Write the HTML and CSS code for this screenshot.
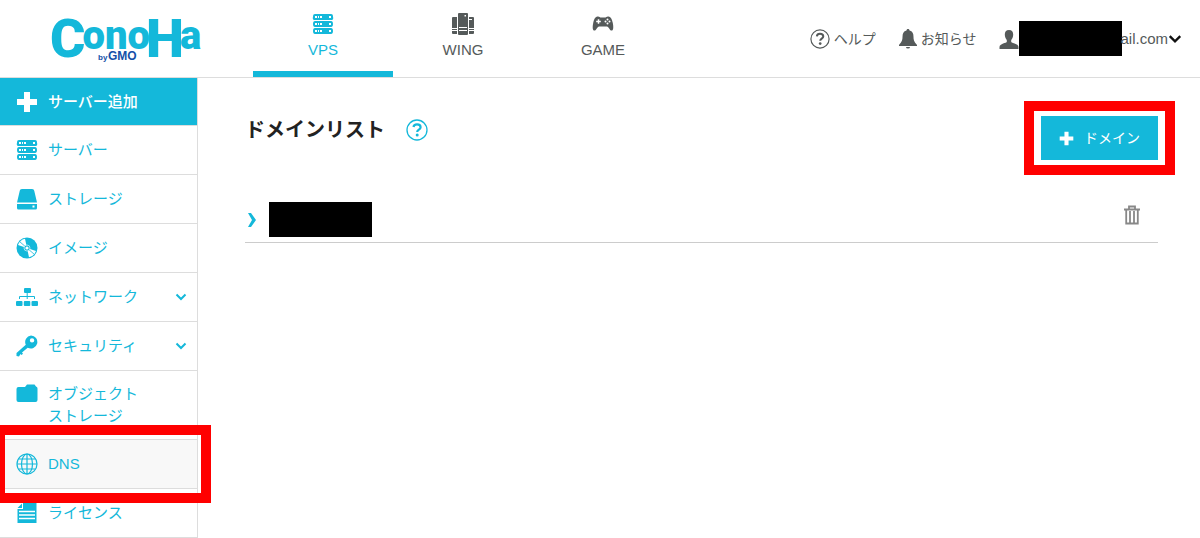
FILE: index.html
```
<!DOCTYPE html>
<html lang="ja">
<head>
  <meta charset="UTF-8" />
  <meta name="viewport" content="width=device-width, initial-scale=1.0"/>
  <title>ドメインリスト | ConoHa</title>
  <link rel="stylesheet" href="styles.css">
</head>
<body>
  <!-- 共通アイコン -->
  <svg class="sprite" aria-hidden="true">
    <symbol id="i-server" viewBox="0 0 22 22">
      <path fill="currentColor" fill-rule="evenodd" d="M3 1h16a2 2 0 0 1 2 2v1a2 2 0 0 1-2 3H3a2 2 0 0 1-2-3V3a2 2 0 0 1 2-2zM3 3v2h2V3zM6 3v2h1V3zM8 3v2h2V3zM17 3v2h2V3zM3 8h16a2 3 0 0 1 0 6H3a2 3 0 0 1 0-6zM3 10v2h2v-2zM6 10v2h1v-2zM8 10v2h2v-2zM17 10v2h2v-2zM3 15h16a2 3 0 0 1 0 6H3a2 3 0 0 1 0-6zM3 17v2h2v-2zM6 17v2h1v-2zM8 17v2h2v-2zM17 17v2h2v-2z"/>
    </symbol>
    <symbol id="i-help" viewBox="0 0 22 22">
      <circle cx="11" cy="11" r="10" fill="none" stroke="currentColor" stroke-width="1.3"/>
      <path d="M7.500 8C7.700 6.300 9.100 5.300 11 5.300c2.100 0 3.600 1.100 3.600 3 0 2.300-3.400 2.400-3.400 4.700" fill="none" stroke="currentColor" stroke-width="2.200"/>
      <circle cx="11.200" cy="16" r="1.500" fill="currentColor"/>
    </symbol>
    <symbol id="i-plus" viewBox="0 0 22 22">
      <path fill="currentColor" d="M8 1h6v7h7v6h-7v7H8v-7H1V8h7z"/>
    </symbol>
    <symbol id="i-down" viewBox="0 0 12 12">
      <path d="M1.500 3.500L6 8l4.500-4.500" fill="none" stroke="currentColor" stroke-width="2"/>
    </symbol>
  </svg>

  <header class="header">
    <a class="logo" href="#" aria-label="ConoHa by GMO">
      <svg width="160" height="58" viewBox="0 0 160 58">
        <text class="logo-name" y="45"><tspan x="0">C</tspan><tspan class="logo-low" dx="-3" dy="-8">ono</tspan><tspan dx="-4" dy="8">H</tspan><tspan class="logo-low" dx="-4" dy="-8">a</tspan></text>
        <text class="logo-by" x="48" y="48">by</text>
        <text class="logo-gmo" x="58" y="48">GMO</text>
      </svg>
    </a>
    <nav class="tabs">
      <a class="tab active" href="#">
        <svg class="icon"><use href="#i-server"/></svg>
        VPS
      </a>
      <a class="tab" href="#">
        <svg class="icon" viewBox="0 0 22 22" fill="currentColor">
          <path fill-rule="evenodd" d="M7 0h8a1 1 0 0 1 1 1v20a1 1 0 0 1-1 1H7a1 1 0 0 1-1-1V1a1 1 0 0 1 1-1zM12.500 2v1.500H14V2zM7 14v1h8v-1zM7 17v1h8v-1z"/>
          <path d="M1 4h4v11H0V5a1 1 0 0 1 1-1zM0 16h5v1H0zM0 18h5v3H1a1 1 0 0 1-1-1zM17 4h4a1 1 0 0 1 1 1v10h-5V7h3V6h-3zM17 16h5v1h-5zM17 18h5v2a1 1 0 0 1-1 1h-4z"/>
        </svg>
        WING
      </a>
      <a class="tab" href="#">
        <svg class="icon" viewBox="0 0 22 22">
          <path fill="currentColor" d="M5.500 3.500C7 3 8 4.500 9 4.500h4c1 0 2-1.500 3.500-1 2.500.3 3.500 3 4.300 6.500.6 3 .9 7-.8 7.500-2.200.7-3.200-4-5-4H7c-1.800 0-2.800 4.700-5 4-1.700-.5-1.400-4.500-.8-7.500.8-3.500 1.800-6.200 4.300-6.500z"/>
          <path d="M6.500 6.200v4.600M4.200 8.500h4.600" stroke="#fff" stroke-width="1.500"/>
          <g fill="#fff"><circle cx="15.500" cy="6.500" r="1"/><circle cx="15.500" cy="10.500" r="1"/><circle cx="13.500" cy="8.500" r="1"/><circle cx="17.500" cy="8.500" r="1"/></g>
        </svg>
        GAME
      </a>
    </nav>
    <div class="tools">
      <a class="tool" href="#">
        <svg class="icon-help"><use href="#i-help"/></svg>
        ヘルプ
      </a>
      <a class="tool" href="#">
        <svg class="icon-bell" viewBox="0 0 18 20" fill="currentColor">
          <path d="M9 0c1 0 1.500.6 1.500 1.500C13.500 2.200 14.500 4.500 14.500 8c0 4 1.500 5.500 3.500 8v1H0v-1c2-2.500 3.500-4 3.500-8 0-3.500 1-5.800 4-6.500C7.500.6 8 0 9 0zM7 18h4a2 1.500 0 0 1-4 0z"/>
        </svg>
        お知らせ
      </a>
      <button class="account" type="button" aria-label="アカウント">
        <svg class="icon-user" viewBox="0 0 20 20" fill="currentColor">
          <path d="M10 1c3 0 4.200 2 4.200 4.500S13.200 10 12.200 11v2c0 1 7.300 1.500 7.300 5V20H.5v-2c0-3.500 7.300-4 7.300-5v-2C6.800 10 5.800 8 5.800 5.500S7 1 10 1z"/>
        </svg>
        <span class="redacted"></span>
        <span class="mail">ail.com</span>
        <svg class="icon-caret"><use href="#i-down"/></svg>
      </button>
    </div>
  </header>

  <div class="layout">
    <ul class="sidebar">
      <li><a class="add" href="#">
        <svg class="icon"><use href="#i-plus"/></svg>
        <span>サーバー追加</span>
      </a></li>
      <li><a href="#">
        <svg class="icon"><use href="#i-server"/></svg>
        <span>サーバー</span>
      </a></li>
      <li><a href="#">
        <svg class="icon" viewBox="0 0 22 22" fill="currentColor">
          <path d="M6 1h10c1.500 0 2 .7 2.300 2L21 14.500H1L3.700 3C4 1.700 4.500 1 6 1z"/>
          <path fill-rule="evenodd" d="M1 16h20v4a1.500 1.500 0 0 1-1.500 1.500h-17A1.500 1.500 0 0 1 1 20zM16.500 17.500v2h2v-2z"/>
        </svg>
        <span>ストレージ</span>
      </a></li>
      <li><a href="#">
        <svg class="icon" viewBox="0 0 22 22">
          <circle cx="11" cy="11" r="10.500" fill="currentColor"/>
          <path d="M11 11L2 8A9.500 9.500 0 0 1 9 1.700zM11 11l9 3a9.500 9.500 0 0 1-7 6.300z" fill="#fff"/>
          <path d="M11 11L3.500 4.500M11 11l7.500 6.500" stroke="currentColor" stroke-width=".8"/>
          <circle cx="11" cy="11" r="3" fill="currentColor" stroke="#fff" stroke-width=".6"/>
          <circle cx="11" cy="11" r="1.600" fill="#fff"/>
        </svg>
        <span>イメージ</span>
      </a></li>
      <li><a href="#">
        <svg class="icon" viewBox="0 0 22 22" fill="currentColor">
          <rect x="8" y="2" width="7" height="5" rx="1"/>
          <rect x="0" y="15" width="6.500" height="5" rx="1"/>
          <rect x="7.800" y="15" width="6.500" height="5" rx="1"/>
          <rect x="15.500" y="15" width="6.500" height="5" rx="1"/>
          <path d="M3.500 13v-2.500h15V13M11.200 7v6" fill="none" stroke="currentColor"/>
        </svg>
        <span>ネットワーク</span>
        <svg class="icon-down"><use href="#i-down"/></svg>
      </a></li>
      <li><a href="#">
        <svg class="icon" viewBox="0 0 22 22">
          <path fill="currentColor" fill-rule="evenodd" d="M15 .5a6.500 6.500 0 1 1-3.300 12.200L6 17.500l1 1.200-1.500 1.300-1-1L3 21.500.5 21v-3l9.300-8.300A6.500 6.500 0 0 1 15 .5zM16 3.200a2.200 2.200 0 1 0 .1 4.400 2.200 2.200 0 0 0-.1-4.400z"/>
        </svg>
        <span>セキュリティ</span>
        <svg class="icon-down"><use href="#i-down"/></svg>
      </a></li>
      <li><a class="two-lines" href="#">
        <svg class="icon" viewBox="0 0 22 22">
          <path fill="currentColor" d="M2.500 4H9l2-2.500h7.500L20 3.500a2 2 0 0 1 1.500 2V17a2 2 0 0 1-2 2h-17a2 2 0 0 1-2-2V6a2 2 0 0 1 2-2z"/>
        </svg>
        <span>オブジェクト<br>ストレージ</span>
      </a></li>
      <li class="marked"><a class="current" href="#">
        <svg class="icon" viewBox="0 0 22 22" fill="none" stroke="currentColor" stroke-width="1.200">
          <circle cx="11" cy="11" r="10"/>
          <ellipse cx="11" cy="11" rx="5.500" ry="10"/>
          <path d="M11 1v20M1 11h20M2.500 6h17M2.500 16h17"/>
        </svg>
        <span>DNS</span>
      </a></li>
      <li><a href="#">
        <svg class="icon" viewBox="0 0 22 22">
          <path fill="currentColor" d="M7 1h13.500v20h-19V7H7z"/>
          <path fill="currentColor" d="M1.500 6L6 1.500V6z"/>
          <path d="M3 9.500h16M3 13h16M3 16.500h16" stroke="#fff" stroke-width="1.300"/>
        </svg>
        <span>ライセンス</span>
      </a></li>
    </ul>

    <main class="main">
      <div class="main-head">
        <h1>ドメインリスト</h1>
        <a class="title-help" href="#" aria-label="ヘルプ"><svg class="icon"><use href="#i-help"/></svg></a>
        <div class="add-domain">
          <button type="button">
            <svg class="icon-plus"><use href="#i-plus"/></svg>
            ドメイン
          </button>
        </div>
      </div>
      <div class="domain-row">
        <button class="open" type="button" aria-label="開く">
          <svg width="10" height="16" viewBox="0 0 10 16"><path fill="currentColor" d="M1 1h3l5 7-5 7H1l4-7z"/></svg>
        </button>
        <span class="redacted"></span>
        <button class="delete" type="button" aria-label="削除">
          <svg width="16" height="20" viewBox="0 0 16 20" fill="none" stroke="currentColor" stroke-width="1.800">
            <path d="M0 4.500h16M5 4V1.500h6V4M2.200 5v13.500h11.600V5M6 6v12M10 6v12"/>
          </svg>
        </button>
      </div>
    </main>
  </div>
</body>
</html>
```
FILE: styles.css
```
* { box-sizing: border-box; }
body {
  margin: 0;
  background: #fff;
  color: #555a5a;
  font-family: "Liberation Sans", "Noto Sans CJK JP", sans-serif;
  font-size: 15px;
  line-height: 22px;
}
a { color: inherit; text-decoration: none; }
button { border: none; background: none; padding: 0; font: inherit; color: inherit; cursor: pointer; }
svg { display: block; flex: none; }
.sprite { position: absolute; width: 0; height: 0; }
.icon { width: 22px; height: 22px; }

/* ヘッダー */
.header {
  display: flex;
  height: 78px;
  border-bottom: 1px solid #ddd;
}
.logo { width: 253px; padding: 12px 0 0 50px; }
.logo-name { fill: #14b8da; font-family: Roboto, sans-serif; font-size: 54px; font-weight: 900; }
.logo-low { font-size: 40px; }
.logo-by { fill: #1450a8; font-size: 8px; font-weight: bold; }
.logo-gmo { fill: #1450a8; font-size: 12px; font-weight: bold; }

.tabs { display: flex; }
.tab {
  width: 140px;
  padding-top: 13px;
  display: flex;
  flex-direction: column;
  align-items: center;
  gap: 4px;
  border-bottom: 6px solid transparent;
}
.tab.active { color: #14b8da; border-color: #14b8da; }

.tools {
  display: flex;
  align-items: center;
  gap: 23px;
  margin-left: auto;
  padding-right: 18px;
  font-size: 14px;
}
.tool { display: flex; align-items: center; gap: 4px; }
.icon-help { width: 20px; height: 20px; }
.icon-bell { width: 18px; height: 20px; }
.icon-user { width: 20px; height: 20px; }
.icon-caret { width: 14px; height: 14px; color: #111; }
.account { display: flex; align-items: center; font-size: 15px; }
.mail { margin-left: -2px; }
.redacted { width: 103px; height: 35px; background: #000; }

/* サイドメニュー */
.layout { display: flex; }
.sidebar {
  width: 198px;
  margin: 0;
  padding: 0;
  list-style: none;
  border-right: 1px solid #ddd;
  color: #14b8da;
}
.sidebar a {
  display: flex;
  align-items: center;
  gap: 10px;
  height: 49px;
  padding: 0 10px 0 16px;
  border-bottom: 1px solid #ddd;
}
.sidebar .add { height: 48px; background: #14b8da; color: #fff; font-weight: 500; }
.sidebar .two-lines { height: 69px; align-items: flex-start; padding-top: 12px; }
.sidebar .current { background: #f8f8f8; }
.icon-down { width: 12px; height: 12px; margin-left: auto; }

/* 赤枠 */
.marked, .add-domain { position: relative; }
.marked::after, .add-domain::after {
  content: "";
  position: absolute;
  border: 10px solid #f00;
  pointer-events: none;
}
.marked::after { top: -15px; right: -14px; bottom: -14px; left: -5px; }
.add-domain::after { top: -15px; right: -17px; bottom: -15px; left: -17px; }

/* メイン */
.main { flex: 1; padding: 38px 42px 0 47px; }
.main-head { display: flex; }
.main-head h1 {
  margin: 0;
  color: #222;
  font-size: 20px;
  line-height: 28px;
}
.title-help { margin: 3px 0 0 21px; color: #14b8da; }
.add-domain { margin-left: auto; }
.add-domain button {
  display: flex;
  align-items: center;
  justify-content: center;
  gap: 10px;
  width: 117px;
  height: 44px;
  background: #14b8da;
  color: #fff;
  font-size: 14px;
}
.icon-plus { width: 15px; height: 15px; }

.domain-row {
  display: flex;
  align-items: center;
  margin-top: 42px;
  padding-bottom: 5px;
  border-bottom: 1px solid #ccc;
}
.open { width: 24px; padding-left: 2px; color: #14b8da; }
.delete { margin: 0 18px 10px auto; color: #888; }
```
